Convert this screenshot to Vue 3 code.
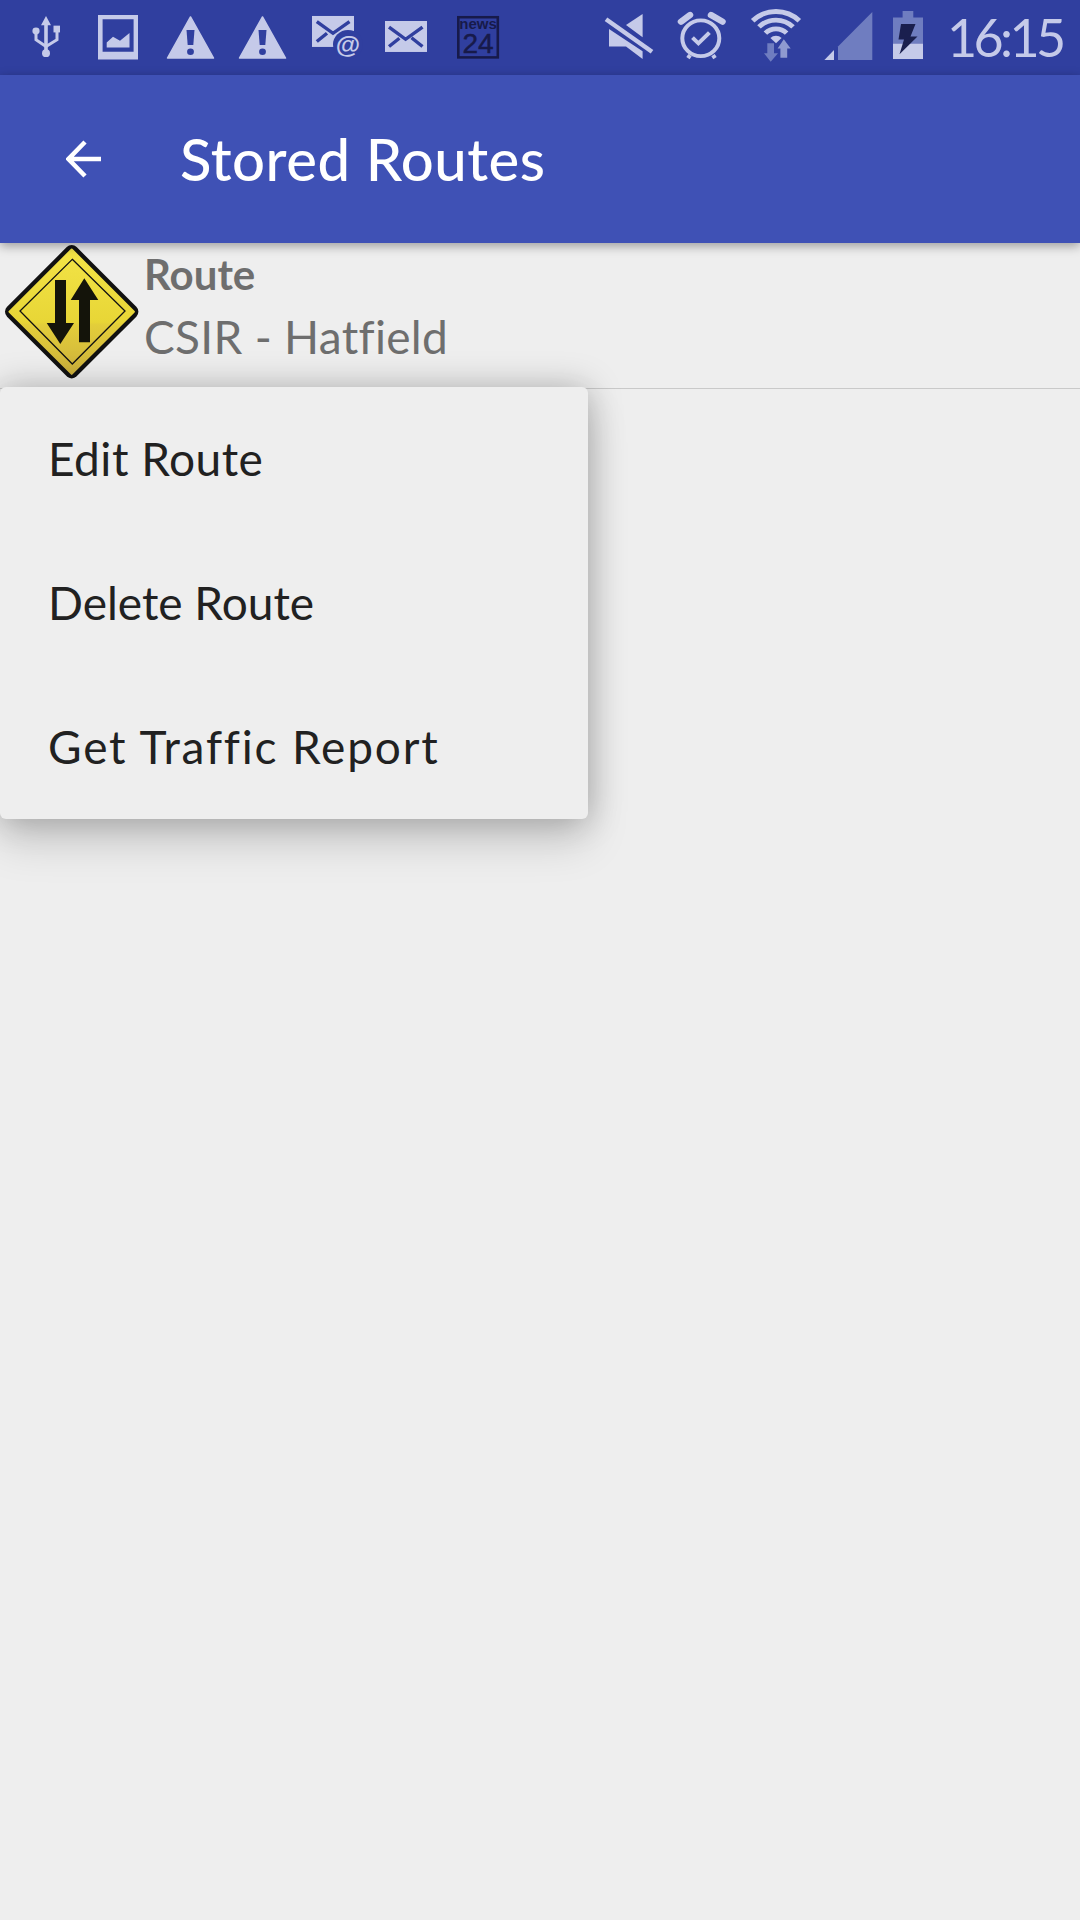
<script setup>
const items = ['Edit Route', 'Delete Route', 'Get Traffic Report']
</script>

<template>
  <div class="screen">
    <header class="status">
      <div class="status-left">
        <svg class="slot" viewBox="0 0 72 77.500" preserveAspectRatio="none">
          <g fill="#c5cae9">
            <path d="M36 16.500l5 9.500h-3.200v30h-3.600V26H31z"/>
            <circle cx="36" cy="55" r="4"/>
            <circle cx="26" cy="32" r="3.600"/>
            <rect x="43.500" y="26.500" width="6.500" height="7"/>
          </g>
          <path d="M26 34v7l10 7M47 33v8l-11 7" fill="none" stroke="#c5cae9" stroke-width="3"/>
        </svg>
        <svg class="slot" viewBox="0 0 72 77.500" preserveAspectRatio="none">
          <path fill="#c5cae9" fill-rule="evenodd" d="M16 15.500h40v46H16zM20.600 20v33.400h31V20zM24.700 49v-5l6.300-6 7 4 9.500-8v15z"/>
        </svg>
        <svg v-for="n in 2" :key="n" class="slot" viewBox="0 0 72 77.500" preserveAspectRatio="none">
          <path fill="#c5cae9" stroke="#c5cae9" stroke-width="1.500" stroke-linejoin="round" d="M36.500 17.500L59.500 60h-46z"/>
          <path fill="#303f9f" d="M32.500 31h8l-1.200 15.500h-5.600z"/>
          <circle cx="36.500" cy="53.500" r="3.400" fill="#303f9f"/>
        </svg>
        <svg class="slot" viewBox="0 0 72 77.500" preserveAspectRatio="none">
          <rect x="14" y="16.500" width="42" height="32" fill="#c5cae9"/>
          <path d="M18.800 22.400L35 34.400l16.500-12M18.800 43L29 34.400" fill="none" stroke="#303f9f" stroke-width="3.400"/>
          <circle cx="50" cy="46" r="15" fill="#303f9f"/>
          <text class="at" x="50" y="55" text-anchor="middle">@</text>
        </svg>
        <svg class="slot" viewBox="0 0 72 77.500" preserveAspectRatio="none">
          <rect x="15" y="21.700" width="42" height="32" fill="#c5cae9"/>
          <path d="M19 28l16.600 12.600L52.500 28M19 48l10.400-8.400M52.500 48l-11-9" fill="none" stroke="#303f9f" stroke-width="3.400"/>
        </svg>
        <svg class="slot" viewBox="0 0 72 77.500" preserveAspectRatio="none">
          <rect x="16.300" y="17.800" width="39.500" height="41.500" fill="none" stroke="#171a4a" stroke-width="2.600"/>
          <text class="news" x="36" y="30" text-anchor="middle">news</text>
          <text class="num" x="36" y="54.500" text-anchor="middle">24</text>
        </svg>
      </div>
      <div class="status-right">
        <svg class="slot" viewBox="0 0 72 77.500" preserveAspectRatio="none">
          <g fill="#c5cae9">
            <path d="M33 25.800l16.600-11.300v24.100z"/>
            <path d="M16 30v18h17l16.600 13v-8z"/>
          </g>
          <path d="M13.500 20.500l45.500 33" stroke="#303f9f" stroke-width="9" fill="none"/>
          <path d="M13 20l46 33.400" stroke="#c5cae9" stroke-width="4.500" fill="none"/>
        </svg>
        <svg class="slot" viewBox="0 0 72 77.500" preserveAspectRatio="none">
          <circle cx="35.800" cy="39.500" r="18.500" fill="none" stroke="#c5cae9" stroke-width="4"/>
          <path d="M27.500 39l5.900 5.800 11-11.100" fill="none" stroke="#c5cae9" stroke-width="4"/>
          <path d="M16 22.400l9-6.900M46 15.500l11.500 6.900" fill="none" stroke="#c5cae9" stroke-width="6.500" stroke-linecap="round"/>
          <path d="M23 60l2-3M48 57l2 3" fill="none" stroke="#c5cae9" stroke-width="4"/>
        </svg>
        <svg class="slot wifi" viewBox="0 0 72 77.500" preserveAspectRatio="none">
          <path d="M12.700 21.500a33 33 0 0 1 46.600 0M19 27.800a24 24 0 0 1 34 0M25.400 34.200a15 15 0 0 1 21.200 0" fill="none" stroke="#c5cae9" stroke-width="5"/>
          <path d="M36 44.800l-5.600-5.600a8 8 0 0 1 11.200 0z" fill="#c5cae9"/>
          <path d="M27.300 44.800H34V55h4l-7.300 8.700L24 55h3.300z" fill="#6f7dc0"/>
          <path d="M40.400 50h-2.800l6.200-9.400 6.900 9.400h-3.500v9.600h-6.800z" fill="#8f9ad0"/>
        </svg>
        <svg class="slot" viewBox="0 0 72 77.500" preserveAspectRatio="none">
          <path d="M26 48l34.300-35.500V62H26z" fill="#6f7dc0"/>
          <path d="M12.400 62L22 51.600V62z" fill="#c5cae9"/>
        </svg>
        <svg class="batt" viewBox="0 0 60 77.500" preserveAspectRatio="none">
          <path d="M18.600 11.400h10.700V18H39v27H9V18h9.600z" fill="#6f7dc0"/>
          <rect x="9" y="45" width="30" height="16" fill="#c5cae9"/>
          <path d="M17 24.800h14.500l-5 13h7L15.500 56l4.500-15.300h-5.500z" fill="#1a1f4e"/>
        </svg>
        <span class="time">16:15</span>
      </div>
    </header>

    <div class="toolbar">
      <svg class="back" width="36" height="40" viewBox="0 0 36 40">
        <path d="M35 20H3M19 3L2.500 20 19 37" fill="none" stroke="#fff" stroke-width="4.500"/>
      </svg>
      <h1 class="title">Stored Routes</h1>
    </div>

    <div class="row">
      <svg class="sign" width="144" height="145" viewBox="0 0 144 145">
        <defs>
          <linearGradient id="yel" gradientUnits="userSpaceOnUse" x1="71.700" y1="6" x2="71.700" y2="132">
            <stop offset="0" stop-color="#f3e447"/>
            <stop offset=".58" stop-color="#e8d636"/>
            <stop offset=".6" stop-color="#e3ce3a"/>
            <stop offset="1" stop-color="#cdb13c"/>
          </linearGradient>
        </defs>
        <rect x="-49.200" y="-49.200" width="98.400" height="98.400" rx="7" transform="translate(71.700 68.700) rotate(45)" fill="#111"/>
        <polygon points="71.700,6.500 133.900,68.700 71.700,130.900 9.500,68.700" fill="url(#yel)" stroke="url(#yel)" stroke-width="2" stroke-linejoin="round"/>
        <polygon points="72.300,16.300 125,68 72.300,121 20,68" fill="none" stroke="#111" stroke-width="1.300"/>
        <path d="M55 37h11v43h8l-13.700 21L46.700 80H55z" fill="#14140a"/>
        <path d="M79 57h-8.300l13.600-21.700L98.300 57H90v42.300H79z" fill="#14140a"/>
      </svg>
      <div class="labels">
        <div class="label">Route</div>
        <div class="sub">CSIR - Hatfield</div>
      </div>

      <ul class="menu">
        <li v-for="item in items" :key="item" class="item">{{ item }}</li>
      </ul>
    </div>
  </div>
</template>

<style scoped>
.screen {
  width: 1080px;
  height: 1920px;
  background: #eee;
  font-family: "Lato", "Liberation Sans", sans-serif;
  font-variant-ligatures: none;
  overflow: hidden;
}
.status {
  height: 75px;
  background: #303f9f;
  display: flex;
  padding-left: 10px;
}
.status-left, .status-right { display: flex; align-items: center; }
.status-right { margin-left: 79px; }
.slot { width: 72px; height: 75px; display: block; flex: none; }
.wifi { margin-left: 3px; }
.batt { width: 60px; height: 75px; display: block; flex: none; }
.at { font: 700 25px "Liberation Sans", sans-serif; fill: #c5cae9; }
.news { font: 700 15px "Liberation Sans", sans-serif; fill: #171a4a; }
.num { font: 400 28px "Liberation Sans", sans-serif; fill: #171a4a; stroke: #171a4a; stroke-width: .5px; }
.time {
  margin-left: 3px;
  font-size: 52px;
  font-weight: 400;
  letter-spacing: -3.600px;
  line-height: 75px;
  white-space: nowrap;
  color: #c5cae9;
}
.toolbar {
  height: 168px;
  background: #3f51b5;
  display: flex;
  align-items: center;
  padding-left: 66px;
  box-shadow: 0 3px 10px rgba(0, 0, 0, .35);
  position: relative;
  z-index: 2;
}
.back { display: block; flex: none; }
.title {
  margin: -2px 0 0 78px;
  font-size: 58px;
  font-weight: 500;
  letter-spacing: .5px;
  color: #fff;
}
.row {
  position: relative;
  height: 145px;
  display: flex;
  border-bottom: 1px solid #c9c9c9;
}
.sign { display: block; flex: none; }
.labels { display: flex; flex-direction: column; }
.label {
  margin-top: 3px;
  font-size: 42px;
  line-height: 56px;
  font-weight: 700;
  color: #6e6e6e;
}
.sub {
  margin-top: 5px;
  font-size: 46px;
  line-height: 60px;
  letter-spacing: .3px;
  color: #6e6e6e;
}
.menu {
  position: absolute;
  top: 144px;
  left: 0;
  width: 588px;
  margin: 0;
  padding: 0;
  list-style: none;
  background: #eee;
  border-radius: 6px;
  box-shadow: 0 0 34px rgba(0, 0, 0, .26), 0 24px 44px rgba(0, 0, 0, .14);
}
.item {
  height: 144px;
  padding: 0 0 2px 48px;
  box-sizing: border-box;
  display: flex;
  align-items: center;
  font-size: 46px;
  color: #212121;
}
.item:nth-child(1) { letter-spacing: .5px; }
.item:nth-child(3) { letter-spacing: 1.8px; }
</style>
